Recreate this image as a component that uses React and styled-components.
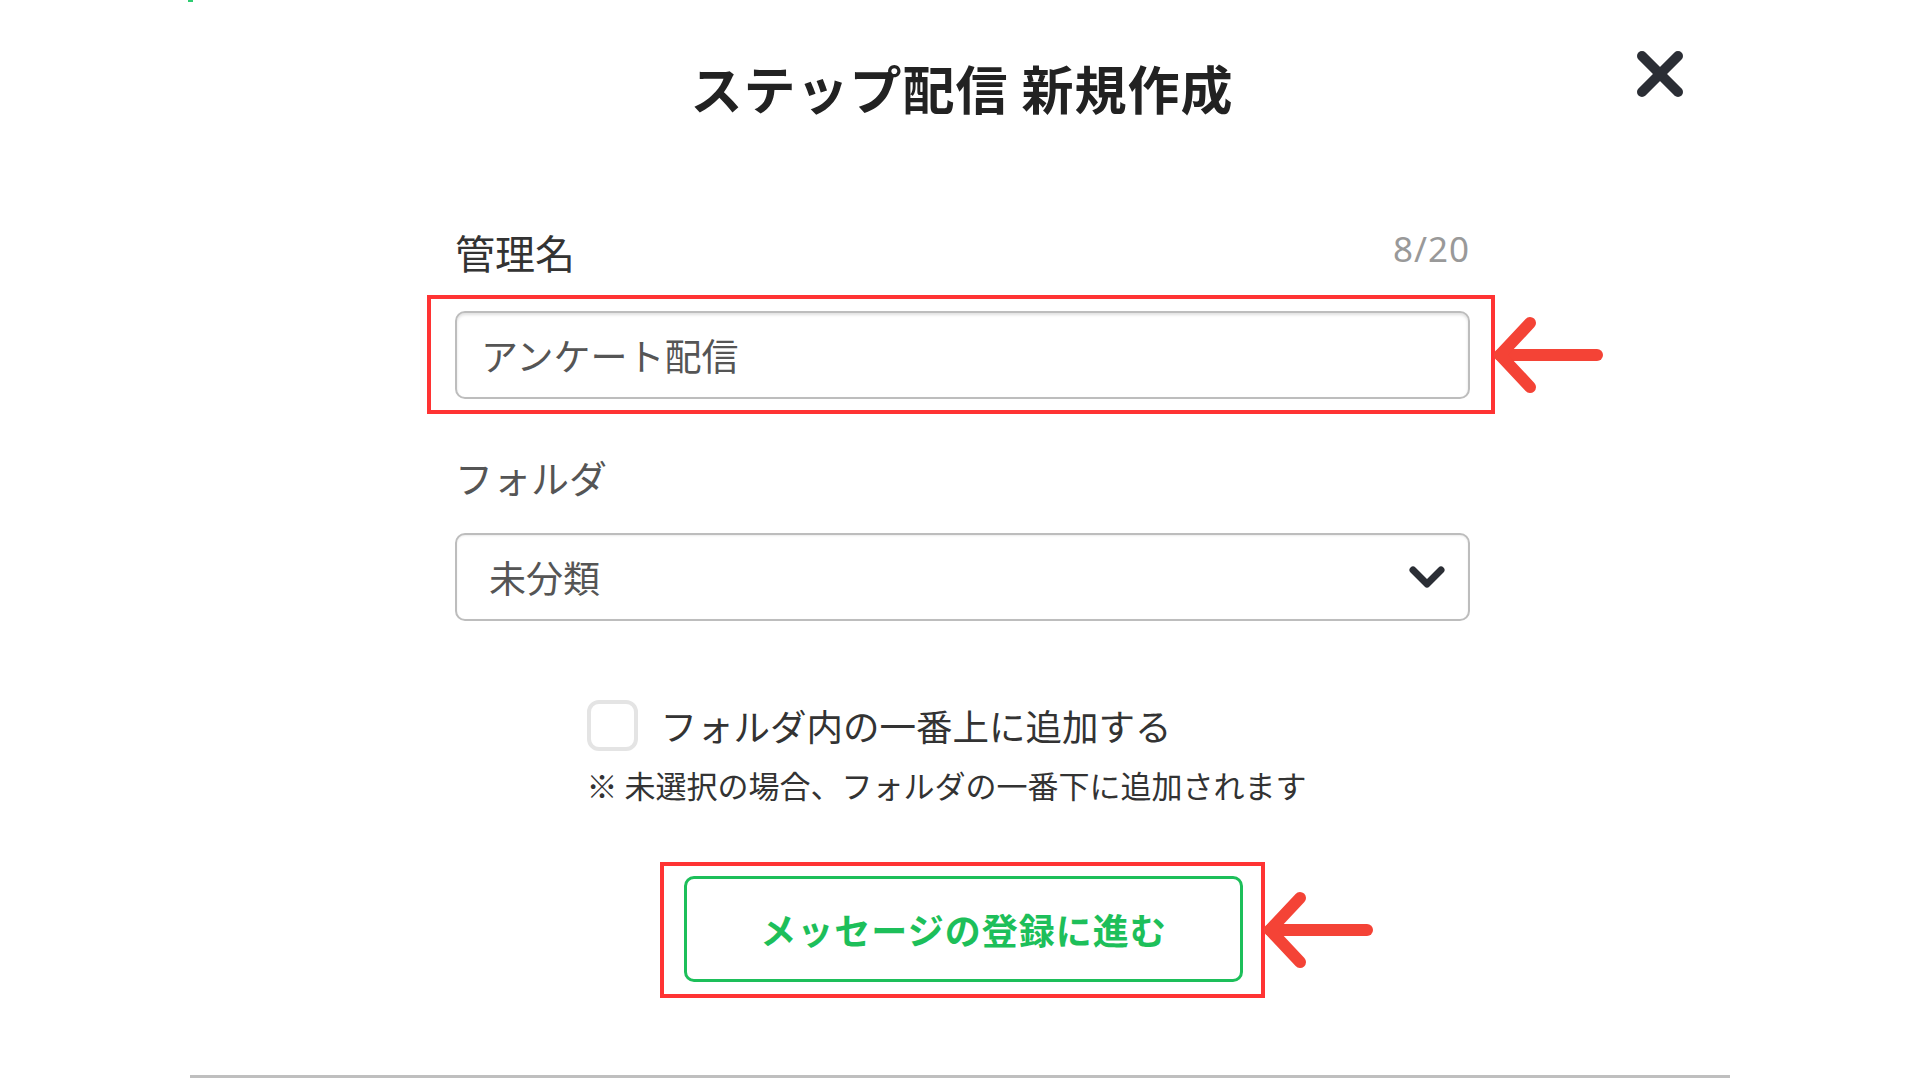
import React, {useState} from 'react';
import styled, {createGlobalStyle} from "styled-components";

const GlobalStyle = createGlobalStyle`
    html, body {
        margin: 0;
        padding: 0;
        background: #FFFFFF;
    }
    body {
        font-family: "Noto Sans CJK JP", "Noto Sans", sans-serif;
        color: #333333;
    }
`

const Page = styled.div`
    width: 1540px;
    margin: 0 auto;
    height: 1080px;
    display: flex;
    flex-direction: column;
    align-items: center;
`

const Header = styled.header`
    width: 100%;
    display: grid;
    grid-template-columns: 1fr auto 1fr;
    align-items: center;
    margin-top: 58px;
`

const Title = styled.h1`
    grid-column: 2;
    margin: 0 0 0 4px;
    font-size: 52px;
    line-height: 60px;
    font-weight: 700;
    color: #222222;
    letter-spacing: 1px;
`

const CloseButton = styled.button`
    grid-column: 3;
    justify-self: end;
    margin: -28px 45px 0 0;
    width: 50px;
    height: 50px;
    padding: 0;
    background: none;
    border: none;
    cursor: pointer;
`

const Form = styled.div`
    width: 1015px;
    margin: 110px 0 0 5px;
    display: flex;
    flex-direction: column;
`

const LabelRow = styled.div`
    display: flex;
    justify-content: space-between;
    align-items: center;
    height: 48px;
    margin-top: ${props => props.gap || 0}px;
`

const Label = styled.label`
    font-size: ${props => props.size || 38}px;
    line-height: 48px;
    color: ${props => props.muted ? "#555555" : "#333333"};
`

const Counter = styled.span`
    font-family: "Noto Sans", sans-serif;
    font-size: 35px;
    color: #999999;
    letter-spacing: 1px;
    margin-top: -8px;
`

const Annotated = styled.div`
    position: relative;
    margin: ${props => props.margin};
    padding: ${props => props.pad};
    border: 4px solid #FF3333;
    align-self: ${props => props.center ? "center" : "stretch"};
`

const Arrow = styled.svg`
    position: absolute;
    left: 100%;
    top: 50%;
    transform: translateY(-50%);
    margin-left: 1px;
`

const Field = styled.div`
    box-sizing: border-box;
    height: 88px;
    border: 2px solid #BDBDBD;
    border-radius: 10px;
    box-shadow: inset 0 2px 3px rgba(0, 0, 0, 0.12);
    display: flex;
    align-items: center;
    justify-content: space-between;
    padding: 0 24px 0 24px;
    font-size: 37px;
    color: #555555;
    margin-top: ${props => props.gap || 0}px;
    background: #FFFFFF;
`

const SelectField = styled(Field)`
    padding: 0 22px 0 32px;
    box-shadow: inset 0 1px 2px rgba(0, 0, 0, 0.08);
    cursor: pointer;
`

const OptionGroup = styled.div`
    align-self: center;
    margin: 79px 27px 0 0;
    display: flex;
    flex-direction: column;
`

const CheckRow = styled.label`
    display: flex;
    align-items: center;
    gap: 23px;
    height: 51px;
    cursor: pointer;
`

const CheckBox = styled.span`
    box-sizing: border-box;
    width: 51px;
    height: 51px;
    border: 4px solid #E4E4E4;
    border-radius: 12px;
    background: ${props => props.checked ? "#1DBF5A" : "#FFFFFF"};
`

const CheckText = styled.span`
    font-size: 36.5px;
    color: #333333;
`

const Note = styled.p`
    margin: 14px 0 0;
    font-size: 31px;
    line-height: 40px;
    color: #333333;
`

const SubmitButton = styled.button`
    box-sizing: border-box;
    width: 559px;
    height: 106px;
    background: #FFFFFF;
    border: 3px solid #1DBF5A;
    border-radius: 10px;
    color: #1DBF5A;
    font-family: "Noto Sans CJK JP", sans-serif;
    font-size: 36px;
    font-weight: 700;
    letter-spacing: 1px;
    cursor: pointer;
    display: block;
`

const Divider = styled.div`
    width: 100%;
    height: 3px;
    background: #BFBFBF;
    margin-top: 77px;
`

const Corner = styled.div`
    position: absolute;
    top: 0;
    left: 188px;
    width: 5px;
    height: 2px;
    background: #2ECC71;
`

function RedArrow({width}) {
    return (
        <Arrow width={width} height="80" viewBox={`0 0 ${width} 80`}>
            <g fill="none" stroke="#F44336" strokeWidth="12" strokeLinecap="round" strokeLinejoin="round">
                <line x1="8" y1="40" x2={width - 7} y2="40" />
                <polyline points="38,8 8,40 38,72" />
            </g>
        </Arrow>
    );
}

function App() {
    const [checked, setChecked] = useState(false)

    return (
        <>
            <GlobalStyle />
            <Corner />
            <Page>
                <Header>
                    <Title>ステップ配信 新規作成</Title>
                    <CloseButton aria-label="閉じる">
                        <svg width="50" height="50" viewBox="0 0 50 50">
                            <g stroke="#2B2E35" strokeWidth="10" strokeLinecap="round">
                                <line x1="7" y1="7" x2="43" y2="43" />
                                <line x1="43" y1="7" x2="7" y2="43" />
                            </g>
                        </svg>
                    </CloseButton>
                </Header>

                <Form>
                    <LabelRow>
                        <Label size={40}>管理名</Label>
                        <Counter>8/20</Counter>
                    </LabelRow>

                    <Annotated margin="19px -25px 0 -28px" pad="12px 21px 11px 24px">
                        <Field>アンケート配信</Field>
                        <RedArrow width={112} />
                    </Annotated>

                    <LabelRow gap={39}>
                        <Label muted>フォルダ</Label>
                    </LabelRow>

                    <SelectField gap={32}>
                        <span>未分類</span>
                        <svg width="38" height="24" viewBox="0 0 38 24">
                            <polyline points="5,5 19,19 33,5" fill="none" stroke="#2B2E35" strokeWidth="7" strokeLinecap="round" strokeLinejoin="round" />
                        </svg>
                    </SelectField>
                </Form>

                <OptionGroup>
                    <CheckRow onClick={() => setChecked(!checked)}>
                        <CheckBox checked={checked} />
                        <CheckText>フォルダ内の一番上に追加する</CheckText>
                    </CheckRow>
                    <Note>※ 未選択の場合、フォルダの一番下に追加されます</Note>
                </OptionGroup>

                <Annotated center margin="57px 0 0 5px" pad="10px 18px 12px 20px">
                    <SubmitButton>メッセージの登録に進む</SubmitButton>
                    <RedArrow width={112} />
                </Annotated>

                <Divider />
            </Page>
        </>
    );
}

export default App;
